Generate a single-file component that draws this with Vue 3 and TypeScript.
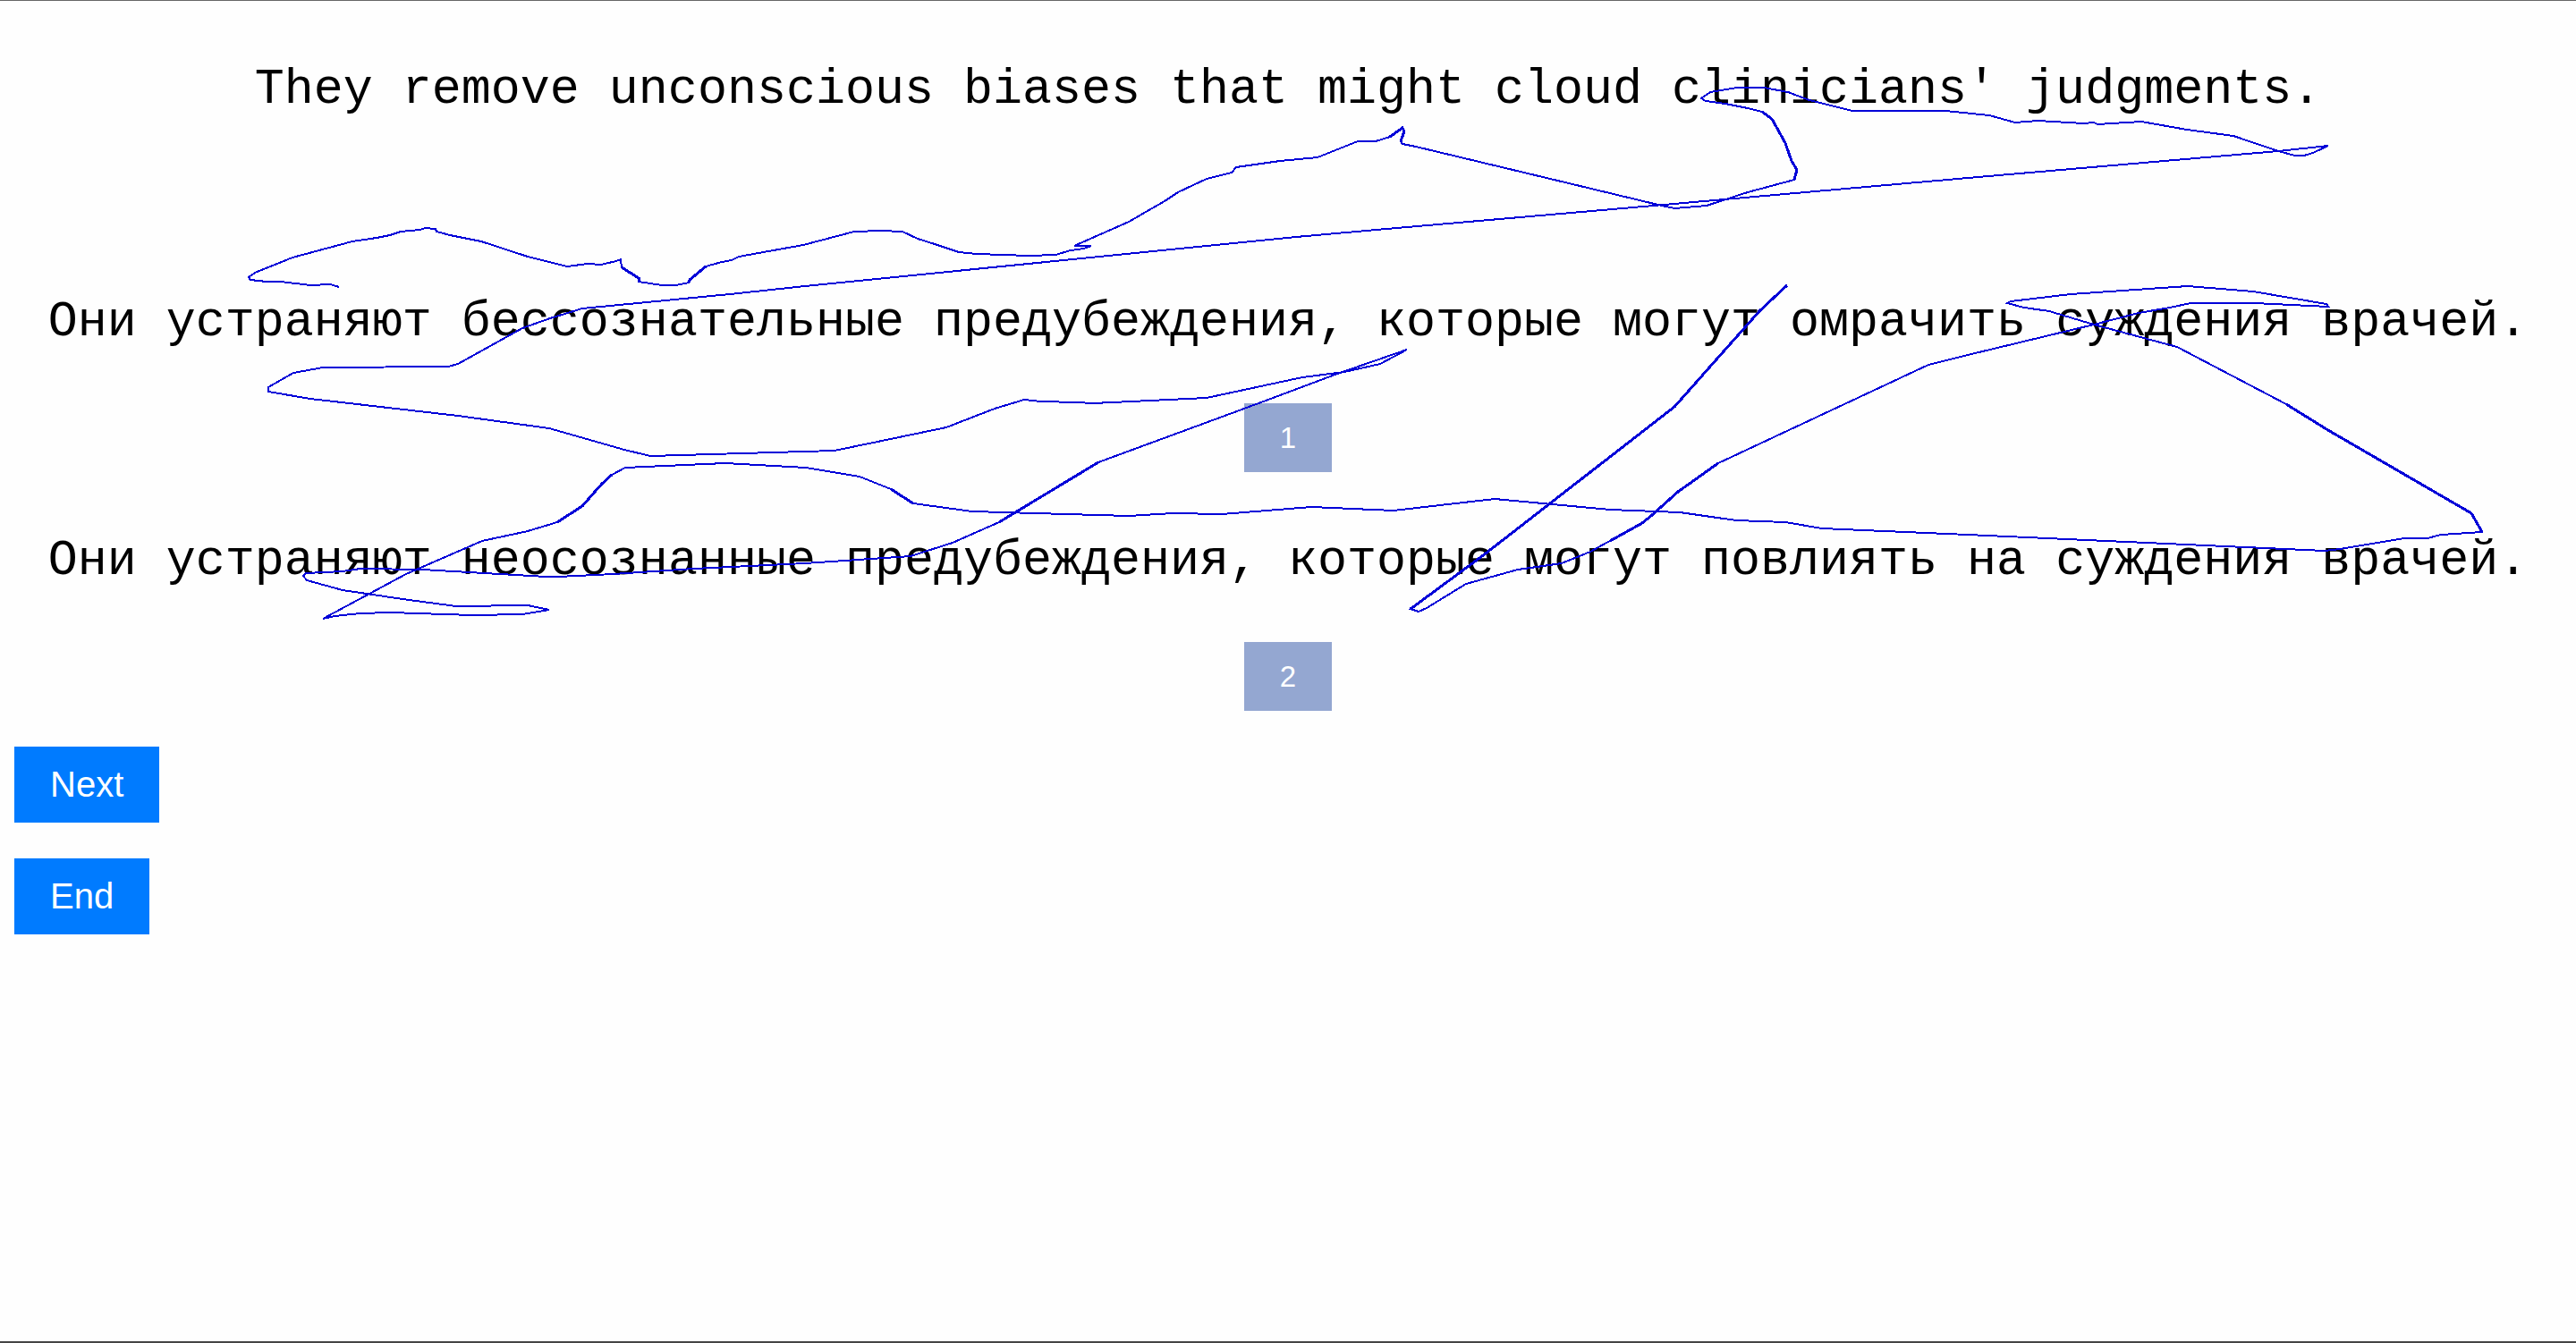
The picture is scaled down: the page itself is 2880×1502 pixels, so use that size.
<script setup lang="ts">
import { ref } from 'vue'

interface Candidate {
  id: number
  text: string
}

const source = "They remove unconscious biases that might cloud clinicians' judgments."

const candidates: Candidate[] = [
  { id: 1, text: 'Они устраняют бессознательные предубеждения, которые могут омрачить суждения врачей.' },
  { id: 2, text: 'Они устраняют неосознанные предубеждения, которые могут повлиять на суждения врачей.' },
]

const chosen = ref<number | null>(null)

// Recorded gaze trail, in the coordinates of the overlay's viewBox
const trail = [
  '379,321 369,318 347,319 314,315 298,315 280,313 278,310 285,305 327,288 394,270 421,266 436,263 448,259 470,257 475,255 487,256 488,259',
  '503,263 538,270 590,287 634,298 657,295 672,296 689,292 694,290 695,299 714,311 714,315 740,319 756,319 770,316 771,313 789,298 807,293',
  '818,291 826,287 898,274 955,259 985,258 1009,259 1026,267 1045,273 1072,282 1092,284 1150,286 1180,285 1197,280 1212,278 1220,275 1201,275',
  '1262,248 1302,225 1317,215 1349,200 1377,193 1382,187 1431,180 1473,176 1498,166 1518,158 1538,158 1554,153 1568,143 1570,147 1566,158 1568,161',
  '1583,164 1729,199 1858,230 1872,233 1908,230 1954,215 2006,201 2009,190 2003,180 1996,160 1981,133 1970,125 1954,121 1929,116 1907,113 1902,110',
  '1912,103 1942,98 1972,98 1999,103 2023,112 2071,124 2117,124 2175,124 2224,129 2253,137 2278,135 2330,138 2341,137 2345,139 2394,136 2445,145',
  '2497,152 2547,169 2566,174 2576,174 2586,171 2603,163 2547,169 2200,199 2041,213 1860,229 1550,256 1449,265 900,320 816,329 651,345 615,356',
  '584,367 512,407 501,410 361,411 328,417 300,433 300,438 347,446 512,465 614,479 698,503 727,510 933,504 1058,478 1112,457 1145,447 1163,449',
  '1204,450 1222,451 1349,445 1456,422 1503,416 1543,407 1573,391 1498,417 1391,457 1228,517 1117,584 1065,607 1018,622 900,630 776,636 686,642',
  '624,645 611,645 472,637 403,636 383,639 342,641 339,644 343,649 383,660 450,670 510,678 590,677 614,682 584,687 528,688 436,685 403,686 374,689',
  '361,692 454,642 539,605 590,594 623,584 651,566 673,541 684,531 699,523 811,518 901,523 961,533 996,547 1021,563 1087,572 1262,577 1311,574',
  '1366,575 1466,567 1558,571 1671,558 1800,570 1878,573 1941,582 1996,584 2037,591 2200,598 2599,616 2616,614 2688,602 2714,602 2729,598 2775,595',
  '2763,574 2601,480 2556,452 2434,388 2341,363 2291,348 2263,344 2244,339 2248,337 2315,329 2373,325 2446,320 2519,326 2601,340 2603,343 2521,339',
  '2449,339 2426,344 2391,350 2341,363 2200,397 2156,408 1921,518 1876,550 1847,576 1836,585 1778,617 1746,630 1697,637 1639,653 1595,680 1586,684',
  '1577,681 1657,622 1872,455 1967,348 1998,319',
].join(' ')

const heavy = [
  '1577,681 1657,622 1872,455 1967,348 1998,319',
  '1921,518 1876,550 1847,576 1836,585 1800,605',
  '2556,452 2601,480 2763,574 2775,595',
  '1228,517 1117,584',
  '623,584 651,566 673,541 684,531',
  '996,547 1021,563',
  '1970,125 1981,133 1996,160 2003,180 2009,190 2006,201',
  '1554,153 1568,143 1570,147 1566,158',
  '695,299 714,311 714,315',
  '770,316 771,313 789,298',
]
</script>

<template>
  <main class="page">
    <p class="sentence source">{{ source }}</p>

    <section class="candidates">
      <div v-for="item in candidates" :key="item.id" class="candidate">
        <p class="sentence">{{ item.text }}</p>
        <button class="pick" type="button" :aria-pressed="chosen === item.id" @click="chosen = item.id">
          {{ item.id }}
        </button>
      </div>
    </section>

    <nav class="actions">
      <button class="action" type="button">Next</button>
      <button class="action" type="button">End</button>
    </nav>

    <svg class="overlay" viewBox="0 0 2880 1502" aria-hidden="true">
      <polyline :points="trail" />
      <polyline v-for="points in heavy" :key="points" class="heavy" :points="points" />
    </svg>
  </main>
</template>

<style>
body {
  background: #fefefe;
}
</style>

<style scoped>
.page {
  position: relative;
  box-sizing: border-box;
  min-height: 100vh;
  padding: 65px 16px 40px;
  border-top: 1px solid #666;
  border-bottom: 2px solid #444;
  overflow: hidden;
}

.sentence {
  margin: 0;
  color: #000;
  font-family: "Liberation Mono", monospace;
  font-size: 55px;
  line-height: 70px;
  text-align: center;
}

.source {
  margin-bottom: 190px;
}

.candidates {
  display: flex;
  flex-direction: column;
  gap: 65px;
}

.candidate {
  display: flex;
  flex-direction: column;
  align-items: center;
  gap: 55px;
}

.pick,
.action {
  padding: 20px 40px;
  border: 0;
  border-radius: 0;
  color: #fff;
  font-family: "Liberation Sans", Arial, sans-serif;
  cursor: pointer;
}

.pick {
  background: #94a7d1;
  font-size: 33px;
  line-height: 37px;
}

.actions {
  display: flex;
  flex-direction: column;
  align-items: flex-start;
  gap: 40px;
  margin-top: 40px;
}

.action {
  background: #007bff;
  font-size: 40px;
  line-height: 45px;
}

.overlay {
  position: absolute;
  top: -1px;
  left: 0;
  width: 100%;
  pointer-events: none;
}

.overlay polyline {
  fill: none;
  stroke: #0000d8;
  stroke-width: 2;
  shape-rendering: crispEdges;
}

.overlay .heavy {
  stroke-width: 3;
}
</style>
